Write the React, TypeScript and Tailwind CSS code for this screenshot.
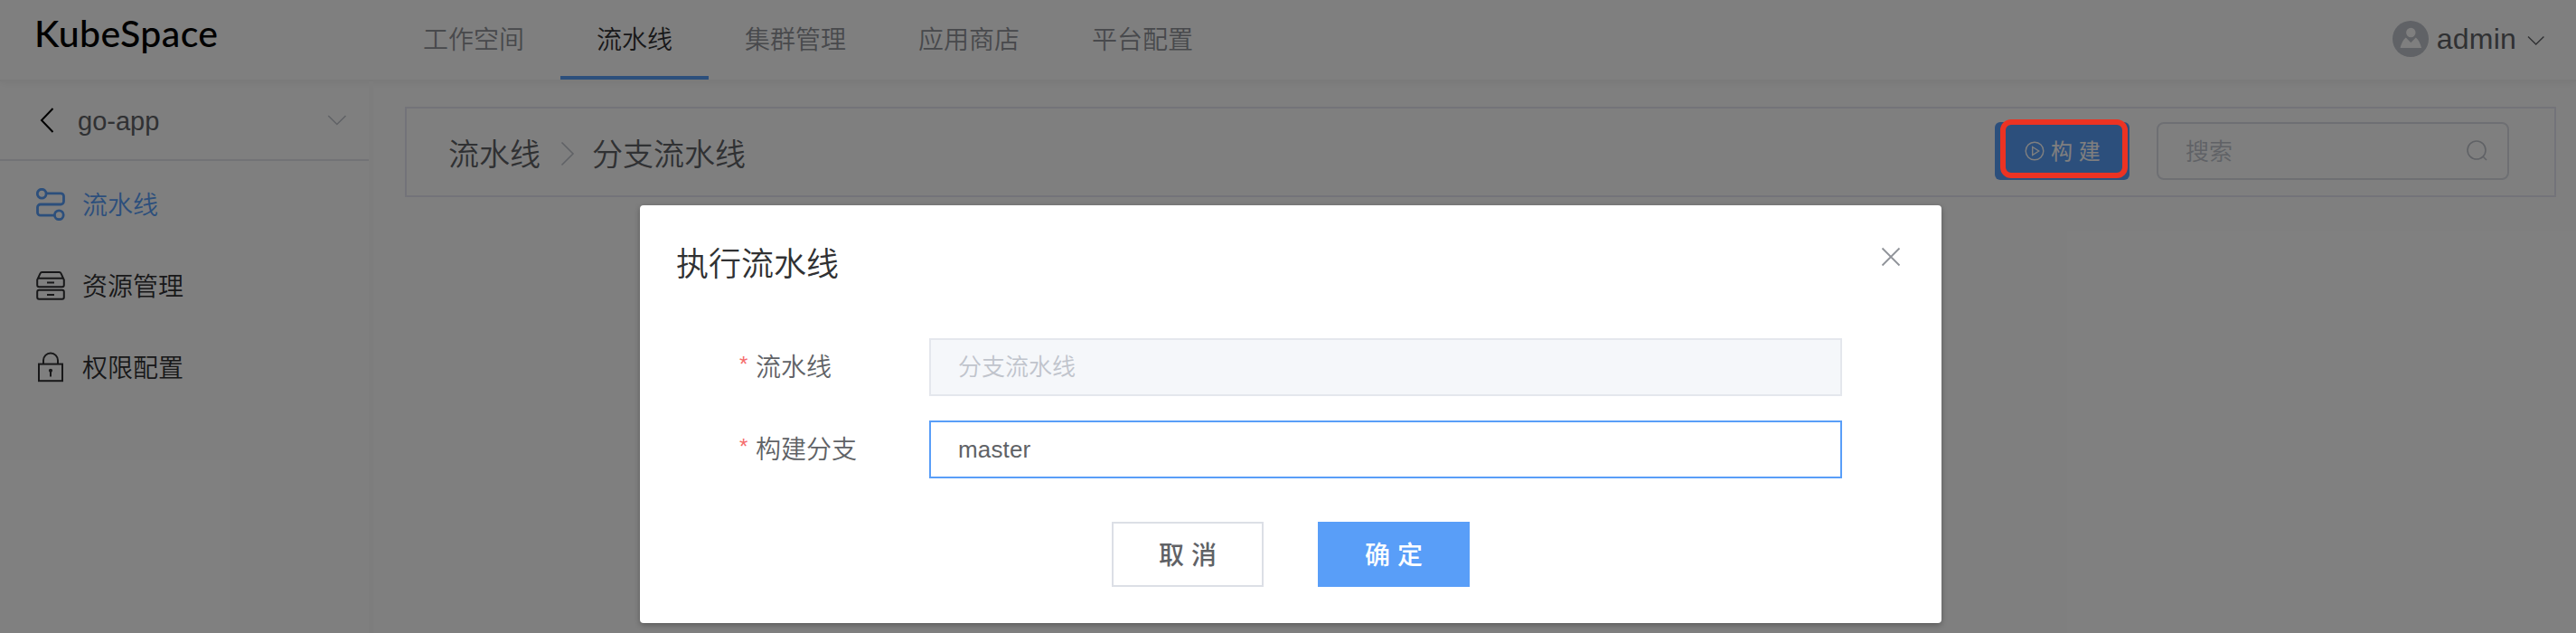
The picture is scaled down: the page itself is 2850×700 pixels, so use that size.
import type { ReactNode } from "react";

const CJK = "font-['Liberation_Sans','Noto_Sans_CJK_SC',sans-serif]";

type NavTab = { label: string; active?: boolean };

const tabs: NavTab[] = [
  { label: "工作空间" },
  { label: "流水线", active: true },
  { label: "集群管理" },
  { label: "应用商店" },
  { label: "平台配置" },
];

function Header() {
  return (
    <header className="flex h-[90px] w-full shrink-0 border-b-2 border-[#f5f5f5] bg-white shadow-[0_2px_8px_rgba(0,0,0,0.06)]">
      <div className="w-[428px] shrink-0 pl-[38px]">
        <span className="block h-[74px] font-['Lato'] text-[41px] leading-[74px] font-medium tracking-[0.4px] text-black">
          KubeSpace
        </span>
      </div>
      <nav className="flex h-[88px]">
        {tabs.map((t) => (
          <a
            key={t.label}
            className={
              t.active
                ? "flex h-[88px] items-center border-b-4 border-[#599ef8] px-10 pt-[5px] text-[28px] leading-[79px] text-[#303133]"
                : "flex h-[88px] items-center border-b-4 border-transparent px-10 pt-[5px] text-[28px] leading-[79px] text-[#909399]"
            }
          >
            {t.label}
          </a>
        ))}
      </nav>
      <div className="ml-auto flex h-[86px] items-center pr-[34px]">
        <svg width="40" height="40" viewBox="0 0 40 40">
          <circle cx="20" cy="20" r="20" fill="#c0c4cc" />
          <circle cx="20.3" cy="13" r="5.2" fill="#fff" />
          <path d="M8.6 30c1-4.500 3.500-9.500 6.200-11.500l5.500 5.700 5.500-5.700c2.700 2 5.200 7 6.200 11.500z" fill="#fff" />
        </svg>
        <span className="ml-[9px] text-[32px] leading-10 tracking-[0.2px] text-[#606266]">admin</span>
        <svg className="mt-1 ml-3" width="20" height="12" viewBox="0 0 20 12" fill="none" stroke="#606266" strokeWidth="1.400">
          <path d="M1 1.500l8.700 8.500 8.700-8.500" />
        </svg>
      </div>
    </header>
  );
}

function PipelineIcon() {
  return (
    <svg width="32" height="36" viewBox="0 0 32 36" fill="none" stroke="#599ef8" strokeWidth="2.800">
      <circle cx="6.200" cy="6.200" r="4.900" />
      <circle cx="25.300" cy="29.800" r="4.900" />
      <path d="M11.200 5.800h16a3.300 3.300 0 0 1 3.300 3.300v5.600a3.300 3.300 0 0 1-3.300 3.300H4.800a3.300 3.300 0 0 0-3.300 3.300v5.600a3.300 3.300 0 0 0 3.300 3.300h15.500" />
    </svg>
  );
}

function ResourceIcon() {
  return (
    <svg width="32" height="34" viewBox="0 0 32 34" fill="none" stroke="#303133" strokeWidth="2">
      <path d="M1.200 10.500L4.600 3.200a2 2 0 0 1 1.800-1.200h19.200a2 2 0 0 1 1.800 1.200l3.400 7.300v5.700a2 2 0 0 1-2 2H3.200a2 2 0 0 1-2-2zM1.500 8.800h29" />
      <rect x="1.200" y="21.800" width="29.600" height="10" rx="2" />
      <path d="M12 13.500h8M12 27h8" />
    </svg>
  );
}

function LockIcon() {
  return (
    <svg width="32" height="34" viewBox="0 0 32 34" fill="none" stroke="#303133" strokeWidth="2">
      <rect x="3" y="13.600" width="26" height="18.600" />
      <path d="M8 13.600V9.500a8 8 0 0 1 16 0v4.100" />
      <circle cx="16" cy="20.800" r="2.100" fill="#303133" stroke="none" />
      <path d="M16 21v6.500" />
    </svg>
  );
}

function MenuItem({ icon, label, active }: { icon: ReactNode; label: string; active?: boolean }) {
  return (
    <div className="flex h-[90px] items-center pl-10">
      <span className="flex w-8 shrink-0 items-center justify-center">{icon}</span>
      <span className={active ? "ml-[19px] pt-1 text-[28px] leading-10 text-[#599ef8]" : "ml-[19px] pt-1 text-[28px] leading-10 text-[#303133]"}>
        {label}
      </span>
    </div>
  );
}

function Sidebar() {
  return (
    <aside className="flex w-[413px] shrink-0 flex-col border-r-[5px] border-[#fafafa]">
      <div className="mb-[3px] flex h-[88px] items-center border-b-2 border-[#e4e7ed] pr-6 pl-11">
        <svg width="16" height="28" viewBox="0 0 16 28" fill="none" stroke="#000" strokeWidth="2">
          <path d="M14.500 1L2 14l12.500 13" />
        </svg>
        <span className="ml-[26px] pt-0.5 text-[29px] leading-10 text-[#606266]">go-app</span>
        <svg className="ml-auto" width="22" height="12" viewBox="0 0 22 12" fill="none" stroke="#c0c4cc" strokeWidth="1.600">
          <path d="M1.200 1l9.600 9.500L20.500 1" />
        </svg>
      </div>
      <MenuItem active label="流水线" icon={<PipelineIcon />} />
      <MenuItem label="资源管理" icon={<ResourceIcon />} />
      <MenuItem label="权限配置" icon={<LockIcon />} />
    </aside>
  );
}

function Toolbar() {
  return (
    <div className="flex h-[100px] items-center border-2 border-[#e6e6f2] pr-[50px] pb-0.5 pl-[46px]">
      <span className="pt-2 text-[34px] leading-[50px] text-[#606266]">流水线</span>
      <svg className="mt-[5px] ml-[21px]" width="18" height="28" viewBox="0 0 18 28" fill="none" stroke="#c0c4cc" strokeWidth="1.600">
        <path d="M2.500 1.500l12.500 12.500L2.500 26.500" />
      </svg>
      <span className="ml-[18px] pt-2 text-[34px] leading-[50px] text-[#606266]">分支流水线</span>
      <button className="ml-auto flex h-16 w-[149px] items-center rounded-md bg-[#599ef8] pl-[33px] text-white">
        <svg width="22" height="22" viewBox="0 0 22 22" fill="none" stroke="#fff" strokeWidth="1.400">
          <circle cx="11" cy="11" r="9.800" />
          <path d="M8.700 6.500l7 4.500-7 4.500z" />
        </svg>
        <span className="ml-[7px] pt-0.5 text-[24px] leading-8 font-normal whitespace-pre">构 建</span>
      </button>
      <div className="ml-[30px] flex h-16 w-[390px] items-center rounded-lg border-2 border-[#dcdfe6] pr-[22px] pl-[30px]">
        <span className="pt-0.5 text-[26px] leading-9 text-[#c0c4cc]">搜索</span>
        <svg className="ml-auto" width="24" height="24" viewBox="0 0 24 24" fill="none" stroke="#c0c4cc" strokeWidth="1.600">
          <circle cx="12" cy="11" r="10" />
          <path d="M19 18l4 4" />
        </svg>
      </div>
    </div>
  );
}

function FormRow({ label, children }: { label: string; children: ReactNode }) {
  return (
    <div className="flex h-16 items-center">
      <div className="flex w-[210px] shrink-0 items-center text-[28px] leading-10 text-[#606266]">
        <span className="mr-[7px] w-[11px] pb-1.5 text-[24px] leading-9 text-[#f56c6c]">*</span>
        <span className="pt-0.5">{label}</span>
      </div>
      {children}
    </div>
  );
}

function Dialog() {
  return (
    <section className="mt-[227px] h-[462px] w-[1440px] rounded bg-white shadow-[0_2px_6px_rgba(0,0,0,0.3)]">
      <div className="flex h-[147px] justify-between pr-[45px] pl-10">
        <h2 className="mt-[42px] text-[36px] leading-[48px] font-[350] text-[#303133]">执行流水线</h2>
        <svg className="mt-[46px]" width="22" height="22" viewBox="0 0 22 22" fill="none" stroke="#909399" strokeWidth="1.800">
          <path d="M1.500 1.500l19 19M20.500 1.500l-19 19" />
        </svg>
      </div>
      <div className="flex flex-col gap-[27px] pl-[110px]">
        <FormRow label="流水线">
          <div className="flex h-16 w-[1010px] items-center border-2 border-[#e4e7ed] bg-[#f5f7fa] pt-px pl-[30px] text-[26px] text-[#c0c4cc]">
            分支流水线
          </div>
        </FormRow>
        <FormRow label="构建分支">
          <div className="flex h-16 w-[1010px] items-center border-2 border-[#599ef8] bg-white pl-[30px] text-[26px] tracking-[0.15px] text-[#606266]">
            master
          </div>
        </FormRow>
      </div>
      <div className="mt-12 flex justify-center gap-[60px]">
        <button className="h-[72px] w-[168px] border-2 border-[#dcdfe6] pt-[3px] text-[28px] font-medium text-[#606266]">取 消</button>
        <button className="h-[72px] w-[168px] bg-[#599ef8] pt-[3px] text-[28px] font-medium text-white">确 定</button>
      </div>
    </section>
  );
}

export default function App() {
  return (
    <div className={`relative flex h-[700px] w-[2850px] flex-col overflow-hidden bg-white font-[350] ${CJK}`}>
      <Header />
      <div className="flex flex-1">
        <Sidebar />
        <main className="flex-1 pt-7 pr-[22px] pl-[35px]">
          <Toolbar />
        </main>
      </div>
      <div className="absolute inset-0 flex items-start justify-center bg-black/50 pl-1.5">
        <Dialog />
      </div>
      <div className="absolute top-[132px] left-[2213px] h-[65px] w-[141px] rounded-xl border-[6px] border-[#ec3323]" />
    </div>
  );
}
